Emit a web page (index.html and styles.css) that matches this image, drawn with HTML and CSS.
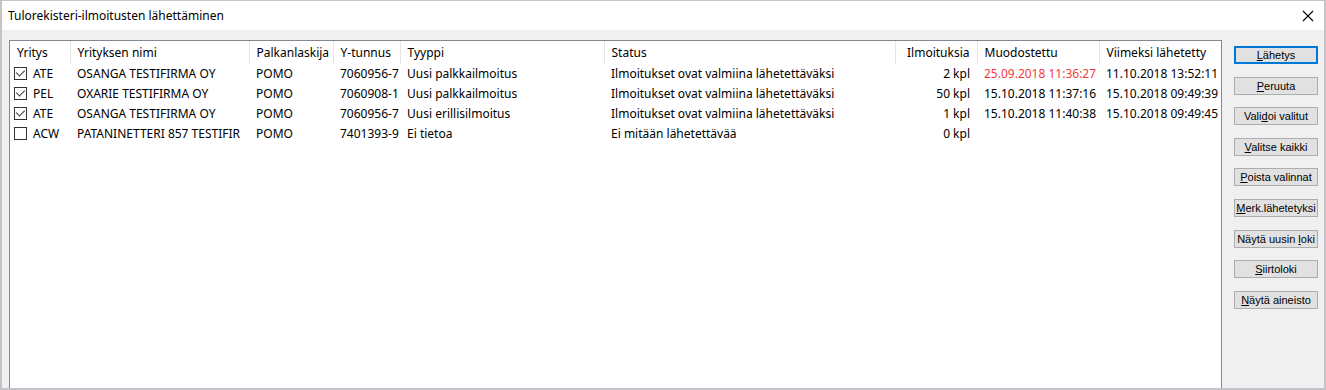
FILE: index.html
```html
<!DOCTYPE html>
<html lang="fi">
<head>
  <meta charset="UTF-8" />
  <title>Tulorekisteri-ilmoitusten lähettäminen</title>
  <link rel="stylesheet" href="styles.css">
</head>
<body>
  <div class="window">
    <div class="titlebar">
      <span class="title">Tulorekisteri-ilmoitusten lähettäminen</span>
      <svg class="close" width="12" height="12" viewBox="0 0 12 12">
        <path d="M1 1 L11 11 M11 1 L1 11" stroke="#000" stroke-width="1.1" fill="none"/>
      </svg>
    </div>

    <div class="content">
      <div class="listbox">
        <table class="list">
          <colgroup>
            <col style="width:60px"><col style="width:179px"><col style="width:84px">
            <col style="width:67px"><col style="width:204px"><col style="width:291px">
            <col style="width:82px"><col style="width:122px"><col style="width:121px">
          </colgroup>
          <thead>
            <tr>
              <th class="first">Yritys</th>
              <th>Yrityksen nimi</th>
              <th>Palkanlaskija</th>
              <th>Y-tunnus</th>
              <th>Tyyppi</th>
              <th>Status</th>
              <th class="num">Ilmoituksia</th>
              <th>Muodostettu</th>
              <th>Viimeksi lähetetty</th>
            </tr>
          </thead>
          <tbody>
            <tr>
              <td class="first"><span class="check on"></span>ATE</td>
              <td>OSANGA TESTIFIRMA OY</td>
              <td>POMO</td>
              <td>7060956-7</td>
              <td>Uusi palkkailmoitus</td>
              <td>Ilmoitukset ovat valmiina lähetettäväksi</td>
              <td class="num">2 kpl</td>
              <td class="late">25.09.2018 11:36:27</td>
              <td>11.10.2018 13:52:11</td>
            </tr>
            <tr>
              <td class="first"><span class="check on"></span>PEL</td>
              <td>OXARIE TESTIFIRMA OY</td>
              <td>POMO</td>
              <td>7060908-1</td>
              <td>Uusi palkkailmoitus</td>
              <td>Ilmoitukset ovat valmiina lähetettäväksi</td>
              <td class="num">50 kpl</td>
              <td>15.10.2018 11:37:16</td>
              <td>15.10.2018 09:49:39</td>
            </tr>
            <tr>
              <td class="first"><span class="check on"></span>ATE</td>
              <td>OSANGA TESTIFIRMA OY</td>
              <td>POMO</td>
              <td>7060956-7</td>
              <td>Uusi erillisilmoitus</td>
              <td>Ilmoitukset ovat valmiina lähetettäväksi</td>
              <td class="num">1 kpl</td>
              <td>15.10.2018 11:40:38</td>
              <td>15.10.2018 09:49:45</td>
            </tr>
            <tr>
              <td class="first"><span class="check"></span>ACW</td>
              <td>PATANINETTERI 857 TESTIFIR</td>
              <td>POMO</td>
              <td>7401393-9</td>
              <td>Ei tietoa</td>
              <td>Ei mitään lähetettävää</td>
              <td class="num">0 kpl</td>
              <td></td>
              <td></td>
            </tr>
          </tbody>
        </table>
      </div>

      <div class="actions">
        <button class="btn default"><u>L</u>ähetys</button>
        <button class="btn"><u>P</u>eruuta</button>
        <button class="btn">Vali<u>d</u>oi valitut</button>
        <button class="btn"><u>V</u>alitse kaikki</button>
        <button class="btn"><u>P</u>oista valinnat</button>
        <button class="btn"><u>M</u>erk.lähetetyksi</button>
        <button class="btn">Näytä uusin <u>l</u>oki</button>
        <button class="btn"><u>S</u>iirtoloki</button>
        <button class="btn"><u>N</u>äytä aineisto</button>
      </div>
    </div>
  </div>
</body>
</html>
```

FILE: styles.css
```css
body {
  margin: 0;
  padding: 0;
  background: #f0f0f0;
  font-family: "Noto Sans", "Open Sans", sans-serif;
  font-size: 12px;
  color: #000;
}
.window {
  width: 1326px;
  height: 390px;
  box-sizing: border-box;
  border: 2px solid #c3c3c8;
  border-top-width: 1px;
  overflow: hidden;
  display: flex;
  flex-direction: column;
}
.titlebar {
  height: 29px;
  background: #fff;
  display: flex;
  align-items: center;
  padding: 0 8px 0 6px;
  flex-shrink: 0;
}
.title {
  flex: 1;
  line-height: 16px;
}
.close {
  margin-right: 2px;
}
.content {
  flex: 1;
  background: #f0f0f0;
  display: flex;
  padding: 10px 0 0 7px;
}
.listbox {
  width: 1213px;
  height: 360px;
  box-sizing: border-box;
  background: #fff;
  border: 1px solid #828790;
  flex-shrink: 0;
}
.list {
  border-collapse: collapse;
  table-layout: fixed;
  width: 1210px;
}
.list th, .list td {
  padding: 0 0 0 7px;
  text-align: left;
  white-space: nowrap;
  overflow: hidden;
  line-height: 16px;
}
.list th {
  font-weight: normal;
  height: 23px;
  border-right: 1px solid #e5e5e5;
}
.list th:last-child {
  border-right: none;
}
.list tbody tr {
  height: 20px;
}
.list td {
  height: 20px;
}
.list .first {
  padding-left: 7px;
}
.list td.first {
  padding-left: 4px;
}
.list .num {
  text-align: right;
  padding: 0 7px 0 0;
}
.list .late {
  color: #f03c3c;
}
.check {
  display: inline-block;
  width: 13px;
  height: 13px;
  box-sizing: border-box;
  border: 1px solid #333;
  background: #fff;
  vertical-align: -2px;
  margin-right: 6px;
  position: relative;
}
.check.on::after {
  content: "";
  position: absolute;
  left: 3px;
  top: 0px;
  width: 4px;
  height: 7px;
  border: solid #333;
  border-width: 0 1px 1px 0;
  transform: rotate(45deg);
}
.actions {
  display: flex;
  flex-direction: column;
  gap: 12.6px;
  padding: 6px 0 0 12px;
}
.btn {
  width: 84px;
  height: 18px;
  box-sizing: border-box;
  background: #e1e1e1;
  border: 1px solid #adadad;
  font-family: "Liberation Sans", Arial, sans-serif;
  font-size: 11px;
  color: #000;
  padding: 0;
  line-height: 14px;
}
.btn.default {
  border-color: #0078d7;
  box-shadow: inset 0 0 0 1px #0078d7;
}
.btn u {
  text-underline-offset: 1px;
}
```
